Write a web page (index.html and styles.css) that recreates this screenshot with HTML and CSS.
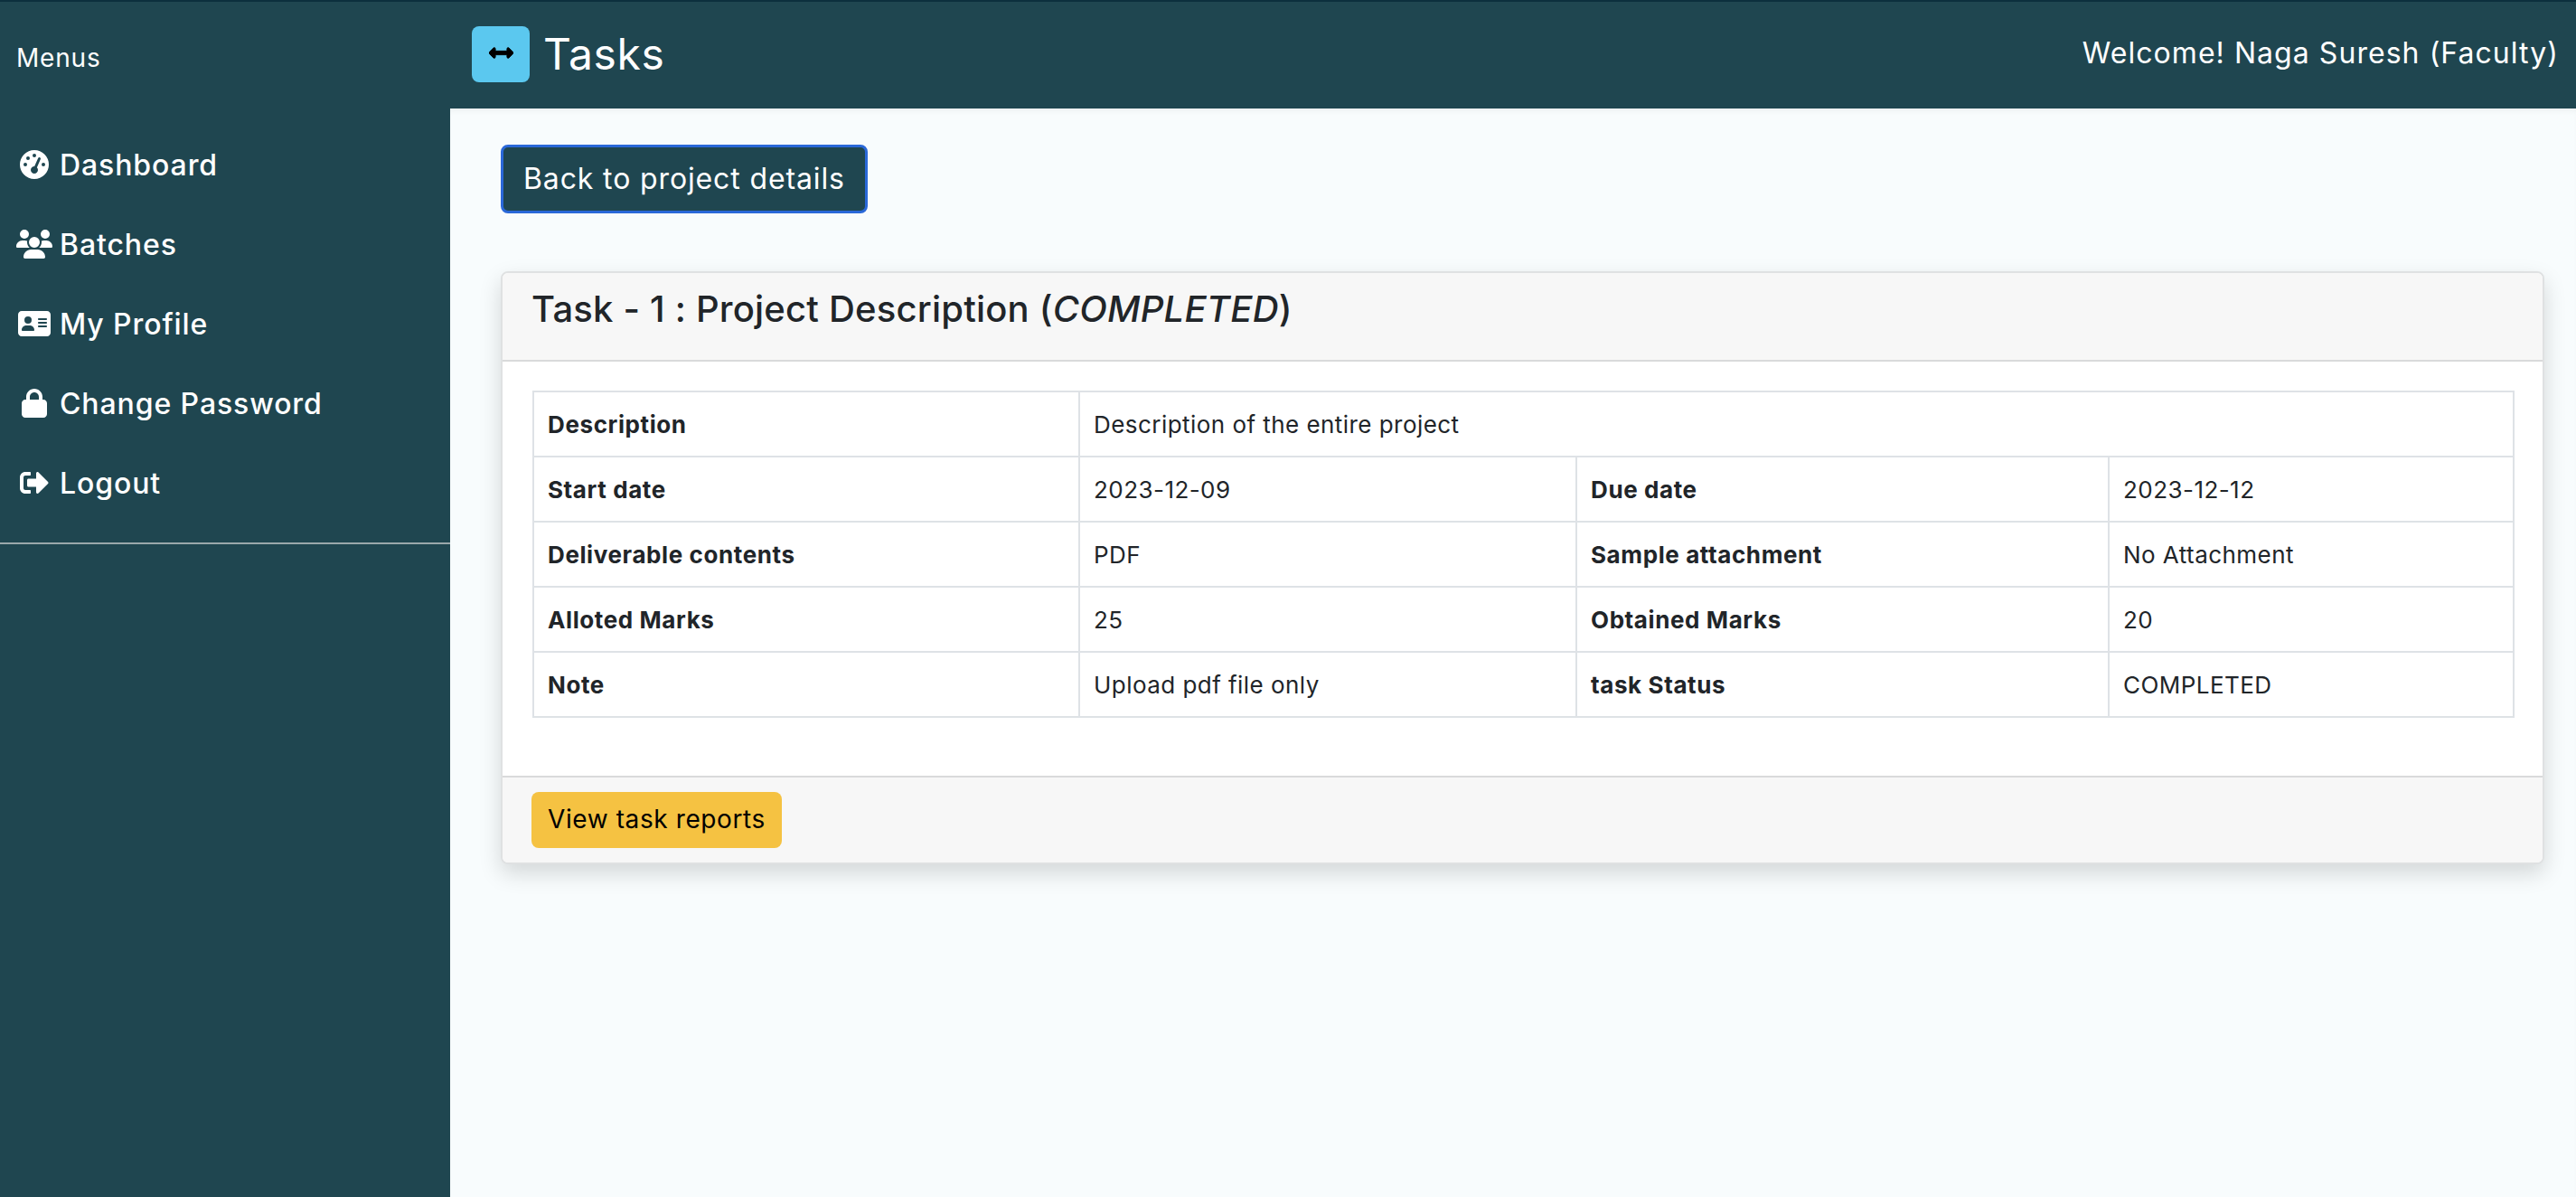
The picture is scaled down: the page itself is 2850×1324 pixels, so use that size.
FILE: index.html
```html
<!DOCTYPE html>
<html>
	<head>
		<meta charset="utf-8">
		<title>Tasks</title>
		<link rel="stylesheet" href="styles.css">
	</head>
	<body>
		<div class="app">
			<aside class="sidebar">
				<div class="sidebar-title">Menus</div>
				<ul class="menu">
					<li><a href="#"><svg class="ico" viewBox="0 0 512 512"><path d="M0 256a256 256 0 1 1 512 0A256 256 0 1 1 0 256zM288 96a32 32 0 1 0 -64 0 32 32 0 1 0 64 0zM256 416c35.3 0 64-28.7 64-64c0-17.4-6.9-33.1-18.1-44.6L366 161.7c5.3-12.1-.2-26.3-12.3-31.6s-26.3 .2-31.6 12.3L257.9 288c-.6 0-1.3 0-1.9 0c-35.3 0-64 28.7-64 64s28.7 64 64 64zM176 144a32 32 0 1 0 -64 0 32 32 0 1 0 64 0zM96 288a32 32 0 1 0 0-64 32 32 0 1 0 0 64zm352-32a32 32 0 1 0 -64 0 32 32 0 1 0 64 0z"/></svg>Dashboard</a></li>
					<li><a href="#"><svg class="ico" viewBox="0 0 640 512"><path d="M144 0a80 80 0 1 1 0 160A80 80 0 1 1 144 0zM512 0a80 80 0 1 1 0 160A80 80 0 1 1 512 0zM0 298.7C0 239.8 47.8 192 106.7 192h42.7c15.9 0 31 3.5 44.6 9.7c-1.3 7.2-1.9 14.7-1.9 22.3c0 38.2 16.8 72.5 43.3 96c-.2 0-.4 0-.7 0H21.3C9.6 320 0 310.4 0 298.7zM405.3 320c-.2 0-.4 0-.7 0c26.6-23.5 43.3-57.8 43.3-96c0-7.6-.7-15-1.9-22.3c13.6-6.3 28.7-9.7 44.6-9.7h42.7C592.2 192 640 239.8 640 298.7c0 11.8-9.6 21.3-21.3 21.3H405.3zM224 224a96 96 0 1 1 192 0 96 96 0 1 1 -192 0zM128 485.3C128 411.7 187.7 352 261.3 352H378.7C452.3 352 512 411.7 512 485.3c0 14.7-11.9 26.7-26.7 26.7H154.7c-14.7 0-26.7-11.9-26.7-26.7z"/></svg>Batches</a></li>
					<li><a href="#"><svg class="ico" viewBox="0 0 576 512"><path d="M64 32C28.7 32 0 60.7 0 96V416c0 35.3 28.7 64 64 64H512c35.3 0 64-28.7 64-64V96c0-35.3-28.7-64-64-64H64zm80 256h64c44.2 0 80 35.8 80 80c0 8.8-7.2 16-16 16H80c-8.8 0-16-7.2-16-16c0-44.2 35.8-80 80-80zm-32-96a64 64 0 1 1 128 0 64 64 0 1 1 -128 0zm256-32H496c8.8 0 16 7.2 16 16s-7.2 16-16 16H368c-8.8 0-16-7.2-16-16s7.2-16 16-16zm0 64H496c8.8 0 16 7.2 16 16s-7.2 16-16 16H368c-8.8 0-16-7.2-16-16s7.2-16 16-16zm0 64H496c8.8 0 16 7.2 16 16s-7.2 16-16 16H368c-8.8 0-16-7.2-16-16s7.2-16 16-16z"/></svg>My Profile</a></li>
					<li><a href="#"><svg class="ico" viewBox="0 0 448 512"><path d="M144 144v48H304V144c0-44.2-35.8-80-80-80s-80 35.8-80 80zM80 192V144C80 64.5 144.5 0 224 0s144 64.5 144 144v48h16c35.3 0 64 28.7 64 64V448c0 35.3-28.7 64-64 64H64c-35.3 0-64-28.7-64-64V256c0-35.3 28.7-64 64-64H80z"/></svg>Change Password</a></li>
					<li><a href="#"><svg class="ico" viewBox="0 0 512 512"><path d="M497 273L329 441c-15 15-41 4.5-41-17v-96H152c-13.3 0-24-10.7-24-24v-96c0-13.3 10.7-24 24-24h136V88c0-21.4 25.9-32 41-17l168 168c9.3 9.4 9.3 24.6 0 34zM192 436v-40c0-6.6-5.4-12-12-12H96c-17.7 0-32-14.3-32-32V160c0-17.7 14.3-32 32-32h84c6.6 0 12-5.4 12-12V76c0-6.6-5.4-12-12-12H96c-53 0-96 43-96 96v192c0 53 43 96 96 96h84c6.6 0 12-5.4 12-12z"/></svg>Logout</a></li>
				</ul>
				<hr class="sidebar-line">
			</aside>
			<div class="main">
				<header class="topbar">
					<div class="page-title">
						<span class="title-icon"><svg viewBox="0 0 512 512"><path d="M377.941 169.941V216H134.059v-46.059c0-21.382-25.851-32.09-40.971-16.971L7.029 239.029c-9.373 9.373-9.373 24.568 0 33.941l86.059 86.059c15.119 15.119 40.971 4.411 40.971-16.971V296h243.882v46.059c0 21.382 25.851 32.09 40.971 16.971l86.059-86.059c9.373-9.373 9.373-24.568 0-33.941l-86.059-86.059c-15.12-15.12-40.971-4.412-40.971 16.97z"/></svg></span>
						<h1>Tasks</h1>
					</div>
					<div class="welcome">Welcome! Naga Suresh (Faculty)</div>
				</header>
				<main class="content">
					<a href="#" class="btn-back">Back to project details</a>
					<section class="card">
						<div class="card-header">
							<h2>Task - 1 : Project Description (<em>COMPLETED</em>)</h2>
						</div>
						<div class="card-body">
							<table class="details">
								<colgroup>
									<col class="col-a"><col class="col-b"><col class="col-c"><col class="col-d">
								</colgroup>
								<tr>
									<th>Description</th>
									<td colspan="3">Description of the entire project</td>
								</tr>
								<tr>
									<th>Start date</th>
									<td>2023-12-09</td>
									<th>Due date</th>
									<td>2023-12-12</td>
								</tr>
								<tr>
									<th>Deliverable contents</th>
									<td>PDF</td>
									<th>Sample attachment</th>
									<td>No Attachment</td>
								</tr>
								<tr>
									<th>Alloted Marks</th>
									<td>25</td>
									<th>Obtained Marks</th>
									<td>20</td>
								</tr>
								<tr>
									<th>Note</th>
									<td>Upload pdf file only</td>
									<th>task Status</th>
									<td>COMPLETED</td>
								</tr>
							</table>
						</div>
						<div class="card-footer">
							<a href="#" class="btn-reports">View task reports</a>
						</div>
					</section>
				</main>
			</div>
		</div>
	</body>
</html>
```

FILE: styles.css
```css
* {
	box-sizing: border-box;
}

html, body {
	margin: 0;
	height: 100%;
}

body {
	font-family: Inter, "Open Sans", sans-serif;
	color: #212529;
	background: #f8fcfd;
	overflow: hidden;
}

a {
	text-decoration: none;
}

.app {
	display: flex;
	height: 100vh;
	border-top: 2px solid #0c2f3d;
}

/* sidebar */
.sidebar {
	width: 498px;
	flex: none;
	background: #1f4650;
	color: #fff;
}

.sidebar-title {
	padding: 44px 0 0 18px;
	height: 136px;
	font-size: 28px;
	line-height: 36px;
	letter-spacing: .8px;
}

.menu {
	list-style: none;
	margin: 0;
	padding: 0;
}

.menu li {
	height: 88px;
}

.menu a {
	display: flex;
	align-items: center;
	height: 88px;
	padding-left: 18px;
	color: #fff;
	font-size: 32px;
	font-weight: 500;
	letter-spacing: .9px;
}

.ico {
	width: 40px;
	height: 32px;
	margin-right: 8px;
	fill: #fff;
	flex: none;
}

.sidebar-line {
	margin: 22px 0 0;
	border: 0;
	border-top: 2px solid #9aa8ab;
}

/* top bar */
.main {
	flex: 1;
	min-width: 0;
	display: flex;
	flex-direction: column;
}

.topbar {
	height: 118px;
	flex: none;
	display: flex;
	align-items: center;
	justify-content: space-between;
	padding: 0 19px 2px 24px;
	background: #1f4650;
	color: #fff;
}

.page-title {
	display: flex;
	align-items: center;
	gap: 15px;
}

.page-title h1 {
	margin: 0;
	font-size: 48px;
	line-height: 60px;
	font-weight: 400;
	letter-spacing: .6px;
}

.title-icon {
	width: 64px;
	height: 62px;
	border-radius: 8px;
	background: #5bc8ef;
	display: flex;
	align-items: center;
	justify-content: center;
}

.title-icon svg {
	width: 27px;
	height: 27px;
	margin-top: -4px;
	stroke: #000;
	stroke-width: 18px;
}

.welcome {
	margin-top: -3px;
	font-size: 32px;
	letter-spacing: 1.05px;
}

/* content */
.content {
	flex: 1;
	padding: 40px 35px 0 56px;
	box-shadow: inset 0 5px 6px -3px rgba(0, 0, 0, .06);
}

.btn-back {
	display: inline-block;
	padding: 0 22px;
	height: 76px;
	line-height: 70px;
	background: #1f4650;
	border: 3px solid #2a68d8;
	border-radius: 8px;
	color: #fff;
	font-size: 32px;
	letter-spacing: .87px;
}

.card {
	margin-top: 64px;
	background: #fff;
	border: 2px solid #dfe1e2;
	border-radius: 8px;
	box-shadow: 0 10px 24px rgba(0, 0, 0, .15);
}

.card-header {
	height: 98px;
	padding: 10px 32px 0;
	background: #f7f7f7;
	border-bottom: 2px solid #d9dadb;
	border-radius: 6px 6px 0 0;
}

.card-header h2 {
	margin: 0;
	font-size: 40px;
	line-height: 60px;
	font-weight: 500;
	letter-spacing: .2px;
}

.card-body {
	padding: 32px 31px 64px 33px;
}

.details {
	width: 100%;
	table-layout: fixed;
	border-collapse: collapse;
	font-size: 26px;
}

.col-a {
	width: 604px;
}

.col-b {
	width: 550px;
}

.col-c {
	width: 589px;
}

.details th, .details td {
	height: 72px;
	padding: 0 15px;
	border: 2px solid #dee2e6;
	text-align: left;
}

.details th {
	font-weight: 700;
	letter-spacing: .6px;
}

.details td {
	font-weight: 400;
	letter-spacing: .45px;
}

.card-footer {
	padding: 16px 32px;
	background: #f7f7f7;
	border-top: 2px solid #d9dadb;
	border-radius: 0 0 6px 6px;
}

.btn-reports {
	display: inline-block;
	height: 62px;
	line-height: 60px;
	padding: 0 18px;
	background: #f5c242;
	border-radius: 8px;
	color: #000;
	font-size: 28px;
	letter-spacing: .6px;
}
```
